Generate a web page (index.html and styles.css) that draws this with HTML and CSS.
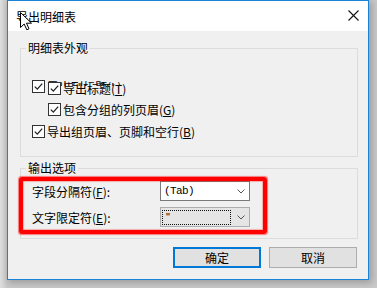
FILE: index.html
```html
<!DOCTYPE html>
<html lang="zh-CN">
<head>
<meta charset="utf-8">
<title>导出明细表</title>
<link rel="stylesheet" href="styles.css">
</head>
<body>
<div class="screen">
  <div class="window">
    <div class="titlebar">
      <span class="title">导出明细表</span>
      <svg class="close" width="11" height="11" viewBox="0 0 11 11"><path d="M0.5 0.5 L10.5 10.5 M10.5 0.5 L0.5 10.5" stroke="#111" stroke-width="1.1" fill="none"/></svg>
    </div>
    <div class="content">
      <div class="group">
        <div class="legend">明细表外观</div>
        <div class="rows">
          <div class="row overlap">
            <span class="cb"><svg width="13" height="13" viewBox="0 0 13 13"><rect x="0.5" y="0.5" width="12" height="12" fill="#fff" stroke="#333"/><path d="M2.8 6.6 L5.3 9.1 L10.2 3.6" stroke="#222" stroke-width="1.3" fill="none"/></svg></span>
            <span class="hidden-text">导出列标题(L)</span>
            <div class="over">
              <span class="cb"><svg width="13" height="13" viewBox="0 0 13 13"><rect x="0.5" y="0.5" width="12" height="12" fill="#fff" stroke="#333"/><path d="M2.8 6.6 L5.3 9.1 L10.2 3.6" stroke="#222" stroke-width="1.3" fill="none"/></svg></span>
              <span class="txt">导出标题(<u>T</u>)</span>
            </div>
          </div>
          <div class="row indent">
            <span class="cb"><svg width="13" height="13" viewBox="0 0 13 13"><rect x="0.5" y="0.5" width="12" height="12" fill="#fff" stroke="#333"/><path d="M2.8 6.6 L5.3 9.1 L10.2 3.6" stroke="#222" stroke-width="1.3" fill="none"/></svg></span>
            <span class="txt">包含分组的列页眉(<u>G</u>)</span>
          </div>
          <div class="row">
            <span class="cb"><svg width="13" height="13" viewBox="0 0 13 13"><rect x="0.5" y="0.5" width="12" height="12" fill="#fff" stroke="#333"/><path d="M2.8 6.6 L5.3 9.1 L10.2 3.6" stroke="#222" stroke-width="1.3" fill="none"/></svg></span>
            <span class="txt">导出组页眉、页脚和空行(<u>B</u>)</span>
          </div>
        </div>
      </div>

      <div class="group g2">
        <div class="legend">输出选项</div>
        <div class="fields">
          <div class="field">
            <span class="field-label">字段分隔符(<u>F</u>):</span>
            <div class="combo">
              <span class="combo-text">(Tab)</span>
              <svg class="chev" width="8" height="5" viewBox="0 0 8 5"><path d="M0.5 0.5 L4 4 L7.5 0.5" stroke="#555" fill="none"/></svg>
            </div>
          </div>
          <div class="field">
            <span class="field-label">文字限定符(<u>E</u>):</span>
            <div class="combo readonly">
              <span class="focus"><span class="quote">"</span></span>
              <svg class="chev" width="8" height="5" viewBox="0 0 8 5"><path d="M0.5 0.5 L4 4 L7.5 0.5" stroke="#555" fill="none"/></svg>
            </div>
          </div>
        </div>
        <div class="annot"></div>
      </div>

      <div class="buttons">
        <button class="btn primary">确定</button>
        <button class="btn">取消</button>
      </div>
    </div>
  </div>
  <svg class="cursor" width="13" height="19" viewBox="0 0 13 19"><path d="M0.5 0.5 V15.5 L4.2 12 L6.8 17.8 L9 16.8 L6.5 11.2 H11.5 Z" fill="#fff" stroke="#000" stroke-width="1" stroke-linejoin="miter"/></svg>
</div>
</body>
</html>
```
FILE: styles.css
```css
* { box-sizing: border-box; }
html, body { margin: 0; }
body {
  width: 377px;
  height: 288px;
  overflow: hidden;
  background: #c9c9c9;
  font-family: "Noto Sans CJK SC", "Noto Sans", sans-serif;
  font-size: 12px;
  color: #000;
}
.screen {
  position: relative;
  height: 288px;
  padding-left: 7px;
  background: linear-gradient(90deg, #dedede 0, #c9c9c9 7px);
}
.window {
  width: 362px;
  height: 280px;
  border: 1px solid #1a82d9;
  background: #f0f0f0;
  box-shadow: 2px 2px 7px 1px rgba(0, 0, 0, 0.22);
  display: flex;
  flex-direction: column;
}
.titlebar {
  height: 30px;
  flex: none;
  background: #fff;
  display: flex;
  align-items: center;
  justify-content: space-between;
  padding: 2px 9px 0 8px;
}
.title { line-height: 14px; }
.close { margin-top: -3px; }

.content { padding: 17px 10px 0 12px; }

.group {
  border: 1px solid #dcdcdc;
  position: relative;
}
.g2 { margin-top: 11px; }
.legend {
  width: max-content;
  height: 12px;
  line-height: 12px;
  margin: -7px 0 0 5px;
  padding: 0 2px;
  background: #f0f0f0;
}

.rows {
  display: flex;
  flex-direction: column;
  gap: 9px;
  padding: 26px 0 18px 11px;
}
.row {
  display: flex;
  align-items: center;
  gap: 2px;
  height: 13px;
  line-height: 13px;
}
.row.indent { padding-left: 16px; }
.row.overlap {
  position: relative;
  height: 14px;
  align-items: flex-start;
}
.cb { display: block; width: 13px; height: 13px; flex: none; }
.cb svg { display: block; }
.txt { white-space: nowrap; }
.hidden-text {
  display: block;
  height: 6px;
  overflow: hidden;
  line-height: 13px;
  white-space: nowrap;
}
.over {
  position: absolute;
  left: 16px;
  top: 2px;
  display: flex;
  align-items: center;
  gap: 2px;
  height: 13px;
  line-height: 13px;
}
u { text-decoration: underline; text-underline-offset: 1px; }

.fields {
  display: flex;
  flex-direction: column;
  gap: 6px;
  padding: 7px 0 11px 11px;
}
.field {
  display: flex;
  align-items: center;
  height: 20px;
}
.field-label { width: 128px; white-space: nowrap; }
.combo {
  width: 90px;
  height: 20px;
  border: 1px solid #7a7a7a;
  background: #fff;
  display: flex;
  align-items: center;
  justify-content: space-between;
  padding: 0 4px 0 3px;
}
.combo-text {
  font-family: "Liberation Mono", monospace;
  font-size: 11px;
  letter-spacing: -0.6px;
}
.combo.readonly {
  background: #e5e5e5;
  border-color: #adadad;
  padding-left: 1px;
}
.focus {
  width: 69px;
  height: 15px;
  border: 1px dotted #111;
  display: block;
  line-height: 10px;
  padding-left: 3px;
}
.quote {
  font-family: "Liberation Sans", sans-serif;
  font-size: 11px;
}
.chev { display: block; }

.annot {
  position: absolute;
  left: -2px;
  top: 8px;
  width: 248px;
  height: 57px;
  border: 4px solid #ff0000;
  border-radius: 3px;
  box-shadow: 0 0 1px 0.5px rgba(255, 0, 0, 0.5), inset 0 0 1px 0.5px rgba(255, 0, 0, 0.5);
}

.buttons {
  display: flex;
  justify-content: flex-end;
  gap: 8px;
  margin: 8px 1px 0 0;
}
.btn {
  width: 88px;
  height: 21px;
  padding: 0;
  border: 1px solid #adadad;
  background: #e1e1e1;
  font-family: "Noto Sans CJK SC", sans-serif;
  font-size: 12px;
  line-height: 17px;
  color: #000;
}
.btn.primary { border: 2px solid #0078d7; }

.cursor {
  position: absolute;
  left: 20px;
  top: 12px;
}
```
